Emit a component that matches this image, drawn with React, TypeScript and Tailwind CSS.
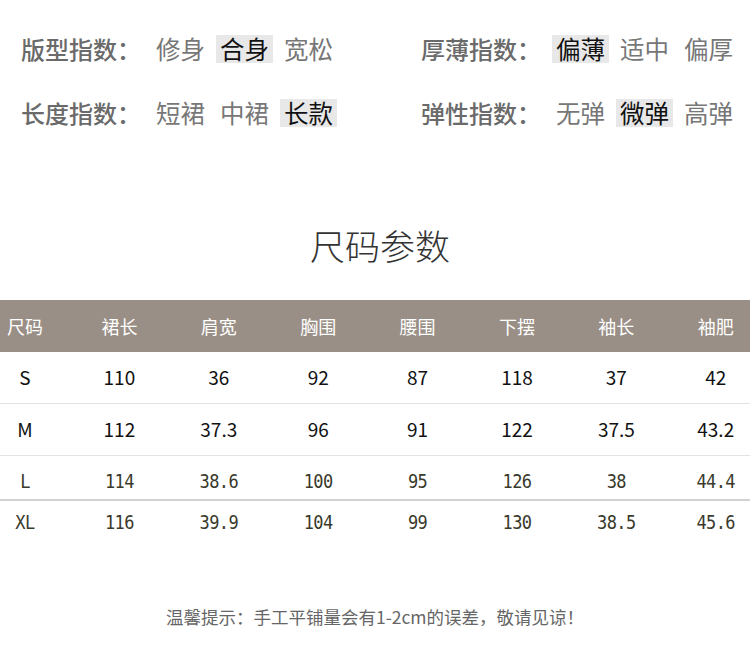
import React from "react";

const font = { fontFamily: '"Noto Sans CJK SC", "Noto Sans", sans-serif' };

type Opt = { t: string; on?: boolean };

function IndexRow({ label, opts }: { label: string; opts: Opt[] }) {
  return (
    <div className="flex items-center gap-[11px]">
      <span className="text-[24px] leading-[28px] font-medium text-[#6a6a6a] w-[120px] whitespace-nowrap">
        {label}
      </span>
      <div className="flex items-center gap-[7px]">
        {opts.map((o) => (
          <span
            key={o.t}
            className={
              "px-[4px] h-[28px] text-[24.5px] leading-[28px] whitespace-nowrap " +
              (o.on ? "bg-[#e8e8e8] text-[#111]" : "text-[#777]")
            }
          >
            {o.t}
          </span>
        ))}
      </div>
    </div>
  );
}

const headers = ["尺码", "裙长", "肩宽", "胸围", "腰围", "下摆", "袖长", "袖肥"];
const rows: { cells: string[]; style: "a" | "b"; h: string; border: string }[] = [
  { cells: ["S", "110", "36", "92", "87", "118", "37", "42"], style: "a", h: "h-[52px]", border: "border-b border-[#e3e3e3]" },
  { cells: ["M", "112", "37.3", "96", "91", "122", "37.5", "43.2"], style: "a", h: "h-[52px]", border: "border-b border-[#e3e3e3]" },
  { cells: ["L", "114", "38.6", "100", "95", "126", "38", "44.4"], style: "b", h: "h-[45px]", border: "border-b-2 border-[#d2d2d2]" },
  { cells: ["XL", "116", "39.9", "104", "99", "130", "38.5", "45.6"], style: "b", h: "h-[36px]", border: "" },
];

const gridCls = "grid grid-cols-[55px_repeat(7,70px)] gap-x-[29.4px] items-center";

export default function App() {
  return (
    <div className="w-[750px] h-[658px] bg-white overflow-hidden" style={font}>
      <div className="pt-[35px] flex flex-col gap-[36px]">
        <div className="flex">
          <div className="w-[421px] pl-[21px]">
            <IndexRow label="版型指数：" opts={[{ t: "修身" }, { t: "合身", on: true }, { t: "宽松" }]} />
          </div>
          <IndexRow label="厚薄指数：" opts={[{ t: "偏薄", on: true }, { t: "适中" }, { t: "偏厚" }]} />
        </div>
        <div className="flex">
          <div className="w-[421px] pl-[21px]">
            <IndexRow label="长度指数：" opts={[{ t: "短裙" }, { t: "中裙" }, { t: "长款", on: true }]} />
          </div>
          <IndexRow label="弹性指数：" opts={[{ t: "无弹" }, { t: "微弹", on: true }, { t: "高弹" }]} />
        </div>
      </div>

      <div className="mt-[98px] text-center text-[35px] leading-[40px] font-light text-[#333] pl-[10px]">
        尺码参数
      </div>

      <div className="mt-[35px]">
        <div className={gridCls + " h-[52px] bg-[#9a8f86] text-white text-[18px]"}>
          {headers.map((h, i) => (
            <div key={h} className={i === 0 ? "w-[50px] text-center" : "text-center"}>
              {h}
            </div>
          ))}
        </div>
        {rows.map((r) => (
          <div key={r.cells[0]} className={gridCls + " " + r.h + " " + r.border}>
            {r.cells.map((c, i) => (
              <div
                key={i}
                className={
                  (i === 0 ? "w-[50px] " : "") +
                  "text-center " +
                  (r.style === "a"
                    ? "text-[19px] text-[#111]"
                    : "text-[17px] leading-[20px] text-[#3a3a2c] tracking-[-0.6px] scale-y-[1.15] translate-y-[3px]")
                }
                style={r.style === "b" ? { fontFamily: '"DejaVu Sans Mono", monospace' } : undefined}
              >
                {c}
              </div>
            ))}
          </div>
        ))}
      </div>

      <div className="mt-[68px] text-center text-[17.5px] leading-[24px] text-[#666]">
        温馨提示：手工平铺量会有1-2cm的误差，敬请见谅！
      </div>
    </div>
  );
}
